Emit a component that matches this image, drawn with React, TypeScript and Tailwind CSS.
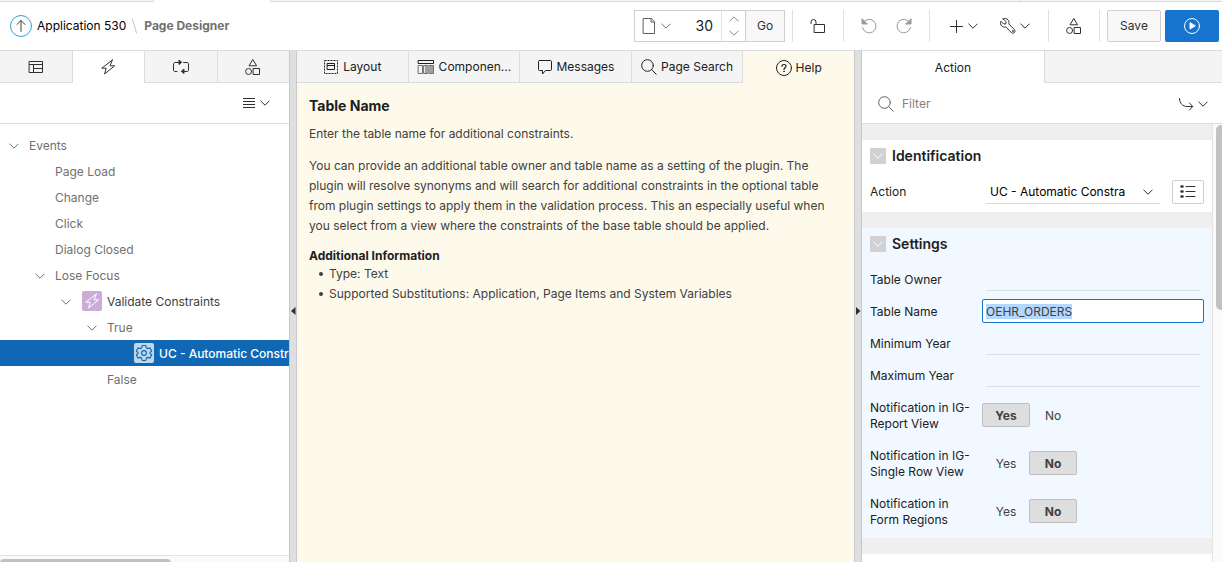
import { useEffect, useRef, useState } from 'react';
import type { ReactNode } from 'react';
import { clsx } from 'clsx';

interface IconProps {
    className?: string;
    box?: string;
    children: ReactNode;
}

const Icon = ({ className = 'size-4', box = '0 0 16 16', children }: IconProps) => (
    <svg
        viewBox={box}
        className={clsx('shrink-0', className)}
        fill="none"
        stroke="currentColor"
        strokeLinecap="round"
        strokeLinejoin="round"
        aria-hidden="true"
    >
        {children}
    </svg>
);

const Chevron = ({ className }: { className?: string }) => (
    <Icon className={clsx('h-2.5 w-2.5', className)} box="0 0 10 10">
        <path d="M.8 3L5 7.200 9.200 3" />
    </Icon>
);

const BoltIcon = ({ className }: { className?: string }) => (
    <Icon className={className}>
        <path d="M12.3 1L1.8 9.2h4.4L4.6 15 14.6 6.8h-4.5L12.3 1z" />
    </Icon>
);

const ShapesIcon = () => (
    <Icon className="size-4">
        <path d="M8 .8l3.6 6H4.4zM8.5 9.5h6v6h-6z" strokeLinejoin="miter" />
        <circle cx="3.6" cy="12.5" r="3" />
    </Icon>
);

const SearchIcon = () => (
    <Icon className="size-4">
        <circle cx="6.5" cy="6.5" r="5.8" />
        <path d="M10.700 10.700l4.500 4.500" />
    </Icon>
);

const GearIcon = () => (
    <Icon className="size-[18px]" box="0 0 24 24">
        <path
            strokeWidth="1.5"
            d="M9.6 2h4.8l.6 3 2 1.2 2.9-1 2.4 4.1L20 11.3v1.4l2.3 2-2.4 4.1-2.9-1-2 1.2-.6 3H9.6l-.6-3-2-1.2-2.9 1-2.4-4.1 2.3-2v-1.4l-2.3-2 2.4-4.1 2.9 1L9 5z"
        />
        <circle cx="12" cy="12" r="3.2" strokeWidth="1.5" />
    </Icon>
);

// Thanh tab của trình duyệt chỉ còn thấy mép dưới
const BrowserStrip = () => (
    <div className="flex h-0.5 shrink-0 bg-[#f6f6f6]" aria-hidden="true">
        <div className="w-[154px] border-r border-b border-[#dadada]" />
        <div className="w-[116px] bg-white" />
        <div className="grow border-b border-l border-[#dadada]" />
        <div className="w-[203px] border-b border-l border-[#dadada]" />
    </div>
);

const Divider = () => <div className="h-8 w-px shrink-0 bg-[#e0e0e0]" />;

const Header = () => (
    <header className="flex h-[49px] shrink-0 items-center justify-between border-b border-[#dcdcdc] bg-white pr-[3px] pl-2.5">
        <nav className="flex items-center" aria-label="Breadcrumb">
            <a href="#app" className="flex items-center gap-[5px] text-black">
                <Icon className="size-[22px]" box="0 0 22 22">
                    <circle cx="11" cy="11" r="10.5" stroke="#309fdb" />
                    <path d="M11 16.5v-11M7 9.5l4-4 4 4" stroke="#404040" />
                </Icon>
                <span>Application 530</span>
            </a>
            <Icon className="mx-[5px] h-4 w-2 text-[#c4c4c4]" box="0 0 8 16">
                <path d="M1.5 1l4 14" />
            </Icon>
            <span className="font-bold text-[#707070]">Page Designer</span>
        </nav>

        <div className="flex items-center">
            <div className="flex h-8 items-stretch border border-[#cfcfcf]">
                <button className="flex w-[42px] items-center justify-center gap-1 text-[#707070]" aria-label="Page list">
                    <Icon className="size-4 text-[#606060]">
                        <path d="M2.5.5h7.8l3.2 3.2v11.8h-11zM10 .5V4h3.5" strokeLinejoin="miter" />
                    </Icon>
                    <Chevron />
                </button>
                <input
                    className="w-11 pr-2 text-right text-sm text-[#202020] outline-none"
                    defaultValue="30"
                    aria-label="Page number"
                />
                <div className="flex w-6 flex-col items-center justify-center gap-1 border-l border-[#e4e4e4] text-[#888]">
                    <button aria-label="Next page"><Chevron className="rotate-180" /></button>
                    <button aria-label="Previous page"><Chevron /></button>
                </div>
                <button className="w-[39px] border-l border-[#cfcfcf] bg-[#f8f8f8] text-[#303030]">Go</button>
            </div>
            <div className="w-[7px]" />
            <Divider />
            <button className="flex w-[50px] justify-center text-[#303030]" aria-label="Unlock">
                <Icon className="size-4">
                    <path d="M4.500 6.500h10v8h-10zM6 6.500V4a2.500 2.500 0 0 0-5 0v1.500" />
                </Icon>
            </button>
            <Divider />
            <button className="ml-2 flex w-[34px] justify-center text-[#9a9a9a]" aria-label="Undo">
                <Icon className="size-4">
                    <path d="M2.2 4.8A6.8 6.8 0 1 1 1.5 9.5" />
                    <path d="M1 1v5h5z" fill="currentColor" />
                </Icon>
            </button>
            <button className="mr-[7px] flex w-9 justify-center text-[#9a9a9a]" aria-label="Redo">
                <Icon className="size-4">
                    <path d="M13.8 4.8A6.8 6.8 0 1 0 14.5 9.5" />
                    <path d="M15 1v5h-5z" fill="currentColor" />
                </Icon>
            </button>
            <Divider />
            <button className="ml-2 flex w-[50px] items-center justify-center gap-1 text-[#303030]" aria-label="Create">
                <Icon className="size-4">
                    <path d="M8.5 2.5v12M2.5 8.5h12" />
                </Icon>
                <Chevron />
            </button>
            <button className="mr-[18px] flex w-[42px] items-center justify-end gap-1 text-[#303030]" aria-label="Utilities">
                <Icon className="size-4">
                    <path d="M3.2.9L6 3.7 5.8 5.8 3.7 6 .9 3.2C.1 5 .5 6.8 1.8 8c1.2 1.100 2.600 1.300 4 .9l5.500 5.600c.9.9 2.200.9 3.100.1.8-.9.8-2.200-.1-3.100L8.800 5.900C9.300 4.400 9 2.900 8 1.800 6.700.5 4.900.1 3.200.9z" />
                    <circle cx="12.8" cy="13" r=".4" />
                </Icon>
                <Chevron />
            </button>
            <Divider />
            <button className="flex w-[50px] justify-center text-[#303030]" aria-label="Shared components">
                <ShapesIcon />
            </button>
            <Divider />
            <button className="ml-[7px] h-8 w-[54px] rounded-xs border border-[#cfcfcf] bg-[#f8f8f8] text-[#303030]">Save</button>
            <button className="ml-1 flex h-8 w-[54px] items-center justify-center rounded-xs bg-[#1673ce] text-white" aria-label="Save and run">
                <Icon className="size-4">
                    <circle cx="8" cy="8" r="7.5" />
                    <path d="M6 5v6l5-3z" fill="currentColor" />
                </Icon>
            </button>
        </div>
    </header>
);

const paneTabs = [
    {
        name: 'Rendering',
        icon: (
            <Icon className="size-4">
                <path d="M1.500 2.500h13v11h-13zM1.500 5.500h13M5.500 5.500v8M5.500 9.500h9" strokeLinejoin="miter" />
            </Icon>
        ),
    },
    { name: 'Dynamic actions', icon: <BoltIcon className="size-4" /> },
    {
        name: 'Processing',
        icon: (
            <Icon className="h-4 w-[18px]" box="0 0 18 16">
                <path d="M7 3.500H3c-.9 0-1.500.6-1.500 1.500v6c0 .9.6 1.500 1.500 1.500h2M11.500 3.500H15c.9 0 1.500.6 1.500 1.500v6c0 .9-.6 1.500-1.500 1.500h-3" />
                <path d="M7 1.500v4l2.500-2zM12 10.500v4l-2.500-2z" fill="currentColor" />
            </Icon>
        ),
    },
    { name: 'Shared components', icon: <ShapesIcon /> },
];

interface TreeNode {
    label: string;
    level: number;
    open?: boolean;
    icon?: 'bolt' | 'gear';
    selected?: boolean;
}

const tree: TreeNode[] = [
    { label: 'Events', level: 0, open: true },
    { label: 'Page Load', level: 1 },
    { label: 'Change', level: 1 },
    { label: 'Click', level: 1 },
    { label: 'Dialog Closed', level: 1 },
    { label: 'Lose Focus', level: 1, open: true },
    { label: 'Validate Constraints', level: 2, open: true, icon: 'bolt' },
    { label: 'True', level: 3, open: true },
    { label: 'UC - Automatic Constra', level: 4, icon: 'gear', selected: true },
    { label: 'False', level: 3 },
];

const TreeRow = ({ node }: { node: TreeNode }) => (
    <li
        role="treeitem"
        aria-selected={!!node.selected}
        className={clsx(
            'flex h-[26px] items-center pt-0.5 whitespace-nowrap',
            node.selected ? 'bg-[#1068b4] font-medium text-white' : node.icon ? 'text-[#404040]' : 'text-[#707070]'
        )}
        style={{ paddingLeft: 3 + node.level * 26 }}
    >
        <span className="mr-1 flex w-[22px] shrink-0 justify-center">
            {node.open && <Chevron className="text-[#707070]" />}
        </span>
        {node.icon && (
            <span
                className={clsx(
                    'mr-[5px] mb-0.5 ml-px flex size-5 shrink-0 items-center justify-center rounded-xs',
                    node.icon === 'bolt' ? 'bg-[#cbacd9] text-white' : 'bg-[#bfd8ec] text-[#1068b4]'
                )}
            >
                {node.icon === 'bolt' ? <BoltIcon className="size-4" /> : <GearIcon />}
            </span>
        )}
        {node.label}
    </li>
);

const TreePane = () => (
    <aside className="flex w-[289px] shrink-0 flex-col overflow-hidden bg-white">
        <div className="flex h-8 shrink-0" role="tablist">
            {paneTabs.map((tab, i) => (
                <button
                    key={tab.name}
                    role="tab"
                    aria-label={tab.name}
                    aria-selected={i === 1}
                    className={clsx(
                        'flex flex-1 items-center justify-center border-[#dcdcdc] text-[#303030]',
                        i < 3 && 'border-r',
                        i !== 1 && 'border-b bg-[#f4f4f4]'
                    )}
                >
                    {tab.icon}
                </button>
            ))}
        </div>
        <div className="flex h-[41px] shrink-0 items-center justify-end border-b border-[#dcdcdc] pr-[19px]">
            <button className="flex items-center gap-1 text-[#303030]" aria-label="Menu">
                <Icon className="size-3.5" box="0 0 14 14">
                    <path d="M1 2.500h12M1 5.500h12M1 8.500h12M1 11.500h12" strokeLinecap="butt" />
                </Icon>
                <Chevron />
            </button>
        </div>
        <ul role="tree" className="min-h-0 grow overflow-hidden pt-2">
            {tree.map((node) => (
                <TreeRow key={node.label} node={node} />
            ))}
        </ul>
        <div className="h-[7px] shrink-0 overflow-hidden border-t border-[#e4e4e4] bg-[#fafafa] pt-[3px]">
            <div className="h-2 w-[171px] rounded-full bg-[#c1c1c1]" />
        </div>
    </aside>
);

const Splitter = ({ side }: { side: 'left' | 'right' }) => (
    <div className="flex w-2 shrink-0 items-center justify-center border-x border-[#c8c8c8] bg-[#dfdfdf] pt-2">
        <button aria-label={`Collapse ${side}`}>
            <svg viewBox="0 0 5 8" className="h-2 w-[5px] fill-[#303030]" aria-hidden="true">
                <path d={side === 'left' ? 'M4.500 0v8L0 4z' : 'M0 0v8l4.500-4z'} />
            </svg>
        </button>
    </div>
);

const centerTabs = [
    {
        name: 'Layout',
        icon: (
            <Icon className="size-4">
                <path d="M1.500 1.500h13v13h-13z" strokeDasharray="2 1" strokeLinecap="butt" />
                <path d="M4.500 4.500h7v6h-7zM4.500 6.500h7" strokeLinejoin="miter" />
            </Icon>
        ),
    },
    {
        name: 'Componen...',
        icon: (
            <Icon className="h-4 w-[18px]" box="0 0 18 16">
                <path d="M1.500 1.500h15v3h-15z" />
                <path d="M1.500 6.500h4v8h-4zM7 6.500h4v8H7zM12.500 6.500h4v8h-4z" stroke="#707070" />
                <path d="M8 7h3v7H8zM13 7h3v7h-3z" fill="#a0a0a0" stroke="none" />
            </Icon>
        ),
    },
    {
        name: 'Messages',
        icon: (
            <Icon className="size-4">
                <path d="M2.500 1.500h11c.6 0 1 .4 1 1v8c0 .6-.4 1-1 1H8.500l-3 3.500v-3.500h-3c-.6 0-1-.4-1-1v-8c0-.6.4-1 1-1z" />
            </Icon>
        ),
    },
    { name: 'Page Search', icon: <SearchIcon /> },
    {
        name: 'Help',
        icon: (
            <Icon className="size-4">
                <circle cx="8" cy="8" r="7.500" />
                <path d="M6 6.300C6 5.100 6.900 4.500 8 4.500s2 .7 2 1.700c0 1.500-2 1.500-2 3.200" strokeWidth="1.200" />
                <circle cx="8" cy="11.500" r=".4" />
            </Icon>
        ),
    },
];

const HelpPane = () => (
    <main className="flex min-w-0 grow flex-col bg-[#fefaeb]">
        <div className="flex h-8 shrink-0" role="tablist">
            {centerTabs.map((tab, i) => (
                <button
                    key={tab.name}
                    role="tab"
                    aria-selected={i === 4}
                    className={clsx(
                        'flex flex-1 items-center justify-center gap-1 border-[#dcdcdc] pt-px text-[#202020]',
                        i < 4 && 'border-r border-b bg-[#f4f4f4]'
                    )}
                >
                    {tab.icon}
                    {tab.name}
                </button>
            ))}
        </div>
        <article className="px-3 pt-[13px] leading-5 text-[#404040]">
            <h2 className="text-sm leading-5 font-bold text-[#202020]">Table Name</h2>
            <p className="mt-2">Enter the table name for additional constraints.</p>
            <p className="mt-3">
                You can provide an additional table owner and table name as a setting of the plugin. The plugin will
                resolve synonyms and will search for additional constraints in the optional table from plugin settings to
                apply them in the validation process. This an especially useful when you select from a view where the
                constraints of the base table should be applied.
            </p>
            <h3 className="mt-2.5 font-bold text-[#202020]">Additional Information</h3>
            <ul className="-mt-0.5 pl-2.5">
                {['Type: Text', 'Supported Substitutions: Application, Page Items and System Variables'].map((item) => (
                    <li
                        key={item}
                        className="flex items-center gap-1.5 before:size-1 before:shrink-0 before:rounded-full before:bg-[#404040] before:content-['']"
                    >
                        {item}
                    </li>
                ))}
            </ul>
        </article>
    </main>
);

interface SectionProps {
    title: string;
    className: string;
    children: ReactNode;
}

const Section = ({ title, className, children }: SectionProps) => (
    <section className={clsx('mt-4 px-2', className)}>
        <h3 className="flex h-9 items-start gap-1.5 pt-2 text-sm leading-4 font-semibold text-[#202020]">
            <button className="flex size-4 items-center justify-center bg-[#cfd1d2] text-white" aria-label={`Collapse ${title}`}>
                <Chevron />
            </button>
            {title}
        </h3>
        {children}
    </section>
);

const rowClass = 'flex min-h-8 items-center text-[#202020]';
const labelClass = 'w-28 shrink-0 pr-1 leading-4';

const TextField = ({ id, label }: { id: string; label: string }) => (
    <div className={rowClass}>
        <label htmlFor={id} className={labelClass}>{label}</label>
        <input id={id} className="mx-1 mb-0.5 h-6 min-w-0 grow border-b border-[#d9dfe2] outline-none" />
    </div>
);

const SwitchField = ({ id, label, value }: { id: string; label: string; value: string }) => {
    const [current, setCurrent] = useState(value);

    return (
        <div className="flex min-h-12 items-center text-[#202020]" role="radiogroup" aria-labelledby={id}>
            <span id={id} className={labelClass}>{label}</span>
            <div className="mb-0.5 flex -space-x-px">
                {['Yes', 'No'].map((option) => (
                    <label
                        key={option}
                        className={clsx(
                            'relative flex h-6 w-12 items-center justify-center rounded-xs border pt-px text-[#404040]',
                            option === current ? 'border-[#bfbfbf] bg-[#dedede] font-bold' : 'border-transparent'
                        )}
                    >
                        <input
                            type="radio"
                            name={id}
                            className="sr-only"
                            checked={option === current}
                            onChange={() => setCurrent(option)}
                        />
                        {option}
                    </label>
                ))}
            </div>
        </div>
    );
};

const PropertyPane = () => {
    const tableName = useRef<HTMLInputElement>(null);

    useEffect(() => {
        tableName.current?.focus();
        tableName.current?.select();
    }, []);

    return (
        <aside className="flex w-[360px] shrink-0 flex-col overflow-hidden bg-white">
            <div className="flex h-8 shrink-0" role="tablist">
                <button role="tab" aria-selected="true" className="w-[183px] border-r border-[#dcdcdc] pt-px text-[#202020]">
                    Action
                </button>
                <div className="grow border-b border-[#dcdcdc] bg-[#f4f4f4]" />
            </div>
            <div className="flex h-[41px] shrink-0 items-center gap-2 border-b border-[#dcdcdc] pt-px pr-3.5 pl-4 text-[#606060]">
                <SearchIcon />
                <input
                    className="min-w-0 grow outline-none placeholder:text-[#808080]"
                    placeholder="Filter"
                    aria-label="Filter"
                />
                <button className="flex items-center gap-1 text-[#303030]" aria-label="Go to group">
                    <Icon className="size-4">
                        <path d="M1.500 2.500c0 5 3.500 8 7.500 8h5.500M11.500 7l3.200 3.500-3.200 3.500" />
                    </Icon>
                    <Chevron />
                </button>
            </div>
            <div className="flex min-h-0 grow">
                <div className="min-w-0 grow overflow-hidden bg-[#efefef]">
                    <Section title="Identification" className="bg-white pb-1">
                        <div className={rowClass}>
                            <label htmlFor="action" className={labelClass}>Action</label>
                            <div className="relative mx-1 min-w-0 grow">
                                <select
                                    id="action"
                                    className="h-6 w-full appearance-none border-b border-[#d9d9d9] pr-8 pl-1 text-black outline-none"
                                >
                                    <option>UC - Automatic Constra</option>
                                </select>
                                <Chevron className="pointer-events-none absolute top-[7px] right-[7px] text-[#303030]" />
                            </div>
                            <button
                                className="ml-2 flex h-6 w-8 items-center justify-center rounded-xs border border-[#cfcfcf] text-[#303030]"
                                aria-label="Quick pick"
                            >
                                <Icon className="size-4">
                                    <path d="M6 2.500h9M6 7.500h9M6 12.500h9" />
                                    <path d="M1.500 2.500h1M1.500 7.500h1M1.500 12.500h1" strokeWidth="2.500" />
                                </Icon>
                            </button>
                        </div>
                    </Section>
                    <Section title="Settings" className="bg-[#f1f8ff] pb-0.5">
                        <TextField id="table-owner" label="Table Owner" />
                        <div className={rowClass}>
                            <label htmlFor="table-name" className={labelClass}>Table Name</label>
                            <input
                                id="table-name"
                                ref={tableName}
                                className="mb-0.5 h-6 min-w-0 grow rounded-xs border border-[#1673ce] bg-white px-[3px] text-[#404040] outline-none selection:bg-[#b3d7fe] selection:text-[#404040]"
                                defaultValue="OEHR_ORDERS"
                            />
                        </div>
                        <TextField id="minimum-year" label="Minimum Year" />
                        <TextField id="maximum-year" label="Maximum Year" />
                        <SwitchField id="ig-report" label="Notification in IG-Report View" value="Yes" />
                        <SwitchField id="ig-single-row" label="Notification in IG-Single Row View" value="No" />
                        <SwitchField id="form-regions" label="Notification in Form Regions" value="No" />
                    </Section>
                    <div className="mt-4 h-10 bg-white" />
                </div>
                <div className="w-2.5 shrink-0 overflow-hidden border-l border-[#e4e4e4] bg-[#fafafa] pt-px pl-[3px]">
                    <div className="h-[185px] w-2.5 rounded-full bg-[#c1c1c1]" />
                </div>
            </div>
        </aside>
    );
};

export default function App() {
    return (
        <div className="flex h-screen flex-col overflow-hidden bg-white font-['Inter',sans-serif] text-xs">
            <BrowserStrip />
            <Header />
            <div className="flex min-h-0 grow">
                <TreePane />
                <Splitter side="left" />
                <HelpPane />
                <Splitter side="right" />
                <PropertyPane />
            </div>
        </div>
    );
}
